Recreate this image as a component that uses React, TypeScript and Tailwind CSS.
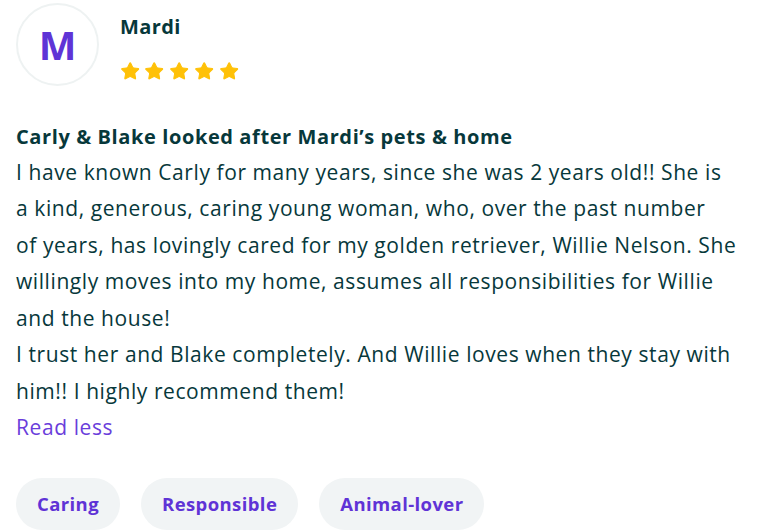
import React from "react";

const Star = () => (
  <svg width="20.4" height="20.4" viewBox="0 0 24 24" className="shrink-0">
    <path
      d="M11.525 2.295a.53.53 0 0 1 .95 0l2.31 4.679a2.123 2.123 0 0 0 1.595 1.16l5.166.756a.53.53 0 0 1 .294.904l-3.736 3.638a2.123 2.123 0 0 0-.611 1.878l.882 5.14a.53.53 0 0 1-.771.56l-4.618-2.428a2.122 2.122 0 0 0-1.973 0L6.396 21.01a.53.53 0 0 1-.77-.56l.881-5.139a2.122 2.122 0 0 0-.611-1.879L2.16 9.795a.53.53 0 0 1 .294-.906l5.165-.755a2.122 2.122 0 0 0 1.597-1.16z"
      fill="#ffc107"
      stroke="#ffc107"
      strokeWidth="1.2"
      strokeLinejoin="round"
    />
  </svg>
);

const lines = [
  "I have known Carly for many years, since she was 2 years old!! She is",
  "a kind, generous, caring young woman, who, over the past number",
  "of years, has lovingly cared for my golden retriever, Willie Nelson. She",
  "willingly moves into my home, assumes all responsibilities for Willie",
  "and the house!",
  "I trust her and Blake completely. And Willie loves when they stay with",
  "him!! I highly recommend them!",
];

export default function App() {
  const tags = ["Caring", "Responsible", "Animal-lover"];
  return (
    <div
      className="w-[760px] h-[531px] bg-white overflow-hidden px-4 text-[#07383b]"
      style={{ fontFamily: '"Open Sans", sans-serif' }}
    >
      <div className="flex items-start gap-[21px] pt-[3px]">
        <div className="w-[83px] h-[83px] rounded-full border-2 border-[#eef2f2] flex items-center justify-center shrink-0">
          <span className="text-[#5f34d6] text-[40px] font-bold leading-none">M</span>
        </div>
        <div className="flex flex-col pt-[10px]">
          <div className="text-[20px] font-bold leading-[28px] tracking-[0.4px]">Mardi</div>
          <div className="flex gap-[4.6px] mt-[20px] -ml-[0.5px]">
            <Star />
            <Star />
            <Star />
            <Star />
            <Star />
          </div>
        </div>
      </div>
      <div className="mt-[35px] text-[20px] font-bold leading-[32.7px] tracking-[0.6px] whitespace-nowrap">
        Carly &amp; Blake looked after Mardi’s pets &amp; home
      </div>
      <div className="text-[21px] leading-[36.5px] tracking-[0.58px]">
        {lines.map((l) => (
          <div key={l} className="whitespace-nowrap">
            {l}
          </div>
        ))}
        <div className="text-[#6a3ddb]">Read less</div>
      </div>
      <div className="flex gap-[21px] mt-[32.5px]">
        {tags.map((t) => (
          <div
            key={t}
            className="h-[52px] px-[21px] rounded-full bg-[#f1f4f5] flex items-center text-[18.5px] font-bold tracking-[0.4px] text-[#5f33d6]"
          >
            {t}
          </div>
        ))}
      </div>
    </div>
  );
}
